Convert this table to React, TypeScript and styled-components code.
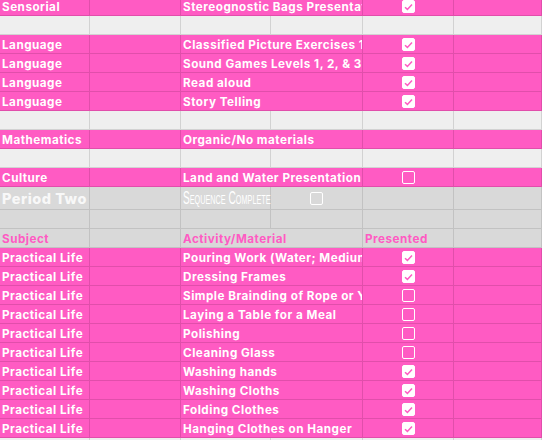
import * as React from "react";
import styled, { createGlobalStyle, css } from "styled-components";

const PINK = "#ff5bc3";

const GlobalStyle = createGlobalStyle`
  html, body {
    margin: 0;
    padding: 0;
    background: #efefef;
    overflow: hidden;
  }
`;

type Tone = "pink" | "light" | "gray" | "header";

const tones = {
  pink: { bg: PINK, line: "#e14eab", color: "#ffffff" },
  light: { bg: "#efefef", line: "#d2d2d2", color: "#ffffff" },
  gray: { bg: "#d9d9d9", line: "#c2c2c2", color: "#ffffff" },
  header: { bg: "#d9d9d9", line: "#c2c2c2", color: PINK }
};

const Sheet = styled.div`
  width: 542px;
  height: 440px;
  overflow: hidden;
  font-family: Inter, "Open Sans", sans-serif;
`;

const Grid = styled.div`
  margin-top: -3px;
  display: flex;
  flex-direction: column;
`;

const Row = styled.div<{ $tone: Tone; $tall?: boolean }>`
  display: grid;
  grid-template-columns: 90px 91px 90px 92px 91px 1fr;
  height: ${(p) => (p.$tall ? 23 : 19)}px;
  background: ${(p) => tones[p.$tone].bg};
  color: ${(p) => tones[p.$tone].color};
  border-bottom: 1px solid ${(p) => tones[p.$tone].line};
  box-sizing: border-box;
  --line: ${(p) => tones[p.$tone].line};
`;

const Cell = styled.div<{ $span?: number; $center?: boolean }>`
  grid-column: span ${(p) => p.$span ?? 1};
  border-right: 1px solid var(--line);
  display: flex;
  align-items: center;
  padding: 1px 2px 0;
  overflow: hidden;
  white-space: nowrap;
  font-size: 11.7px;
  font-weight: 700;
  letter-spacing: 0.5px;
  ${(p) =>
    p.$center &&
    css`
      justify-content: center;
    `}
`;

const PeriodTitle = styled(Cell)`
  font-size: 14.5px;
  font-weight: 800;
  letter-spacing: 0.5px;
  color: #f8f8f8;
`;

const SequenceCell = styled(Cell)`
  overflow: visible;
`;

const SequenceLabel = styled.span`
  display: inline-block;
  font-family: "Liberation Sans", sans-serif;
  font-variant: small-caps;
  font-weight: 400;
  font-size: 18px;
  letter-spacing: 0;
  color: #ffffff;
  transform: scaleX(0.56);
  transform-origin: left center;
`;

const Box = styled.span<{ $checked: boolean }>`
  width: 13px;
  height: 13px;
  box-sizing: border-box;
  border-radius: 2px;
  border: 1.5px solid #ffffff;
  background: ${(p) => (p.$checked ? "#ffffff" : "transparent")};
  display: flex;
  align-items: center;
  justify-content: center;
`;

const Check = ({ checked }: { checked: boolean }) => (
  <Box $checked={checked}>
    {checked && (
      <svg width="9" height="8" viewBox="0 0 9 8">
        <path d="M1 4.2 L3.4 6.4 L8 1.4" fill="none" stroke={PINK} strokeWidth="1.5" />
      </svg>
    )}
  </Box>
);

type Entry =
  | { kind: "item"; subject: string; activity: string; done?: boolean }
  | { kind: "empty" }
  | { kind: "period" }
  | { kind: "blankGray" }
  | { kind: "header" };

const rows: Entry[] = [
  { kind: "item", subject: "Sensorial", activity: "Stereognostic Bags Presentation", done: true },
  { kind: "empty" },
  { kind: "item", subject: "Language", activity: "Classified Picture Exercises 1", done: true },
  { kind: "item", subject: "Language", activity: "Sound Games Levels 1, 2, & 3", done: true },
  { kind: "item", subject: "Language", activity: "Read aloud", done: true },
  { kind: "item", subject: "Language", activity: "Story Telling", done: true },
  { kind: "empty" },
  { kind: "item", subject: "Mathematics", activity: "Organic/No materials" },
  { kind: "empty" },
  { kind: "item", subject: "Culture", activity: "Land and Water Presentation", done: false },
  { kind: "period" },
  { kind: "blankGray" },
  { kind: "header" },
  { kind: "item", subject: "Practical Life", activity: "Pouring Work (Water; Medium)", done: true },
  { kind: "item", subject: "Practical Life", activity: "Dressing Frames", done: true },
  { kind: "item", subject: "Practical Life", activity: "Simple Brainding of Rope or Yarn", done: false },
  { kind: "item", subject: "Practical Life", activity: "Laying a Table for a Meal", done: false },
  { kind: "item", subject: "Practical Life", activity: "Polishing", done: false },
  { kind: "item", subject: "Practical Life", activity: "Cleaning Glass", done: false },
  { kind: "item", subject: "Practical Life", activity: "Washing hands", done: true },
  { kind: "item", subject: "Practical Life", activity: "Washing Cloths", done: true },
  { kind: "item", subject: "Practical Life", activity: "Folding Clothes", done: true },
  { kind: "item", subject: "Practical Life", activity: "Hanging Clothes on Hanger", done: true },
  { kind: "empty" }
];

const blanks = (n: number) => Array.from({ length: n }, (_, k) => <Cell key={k} />);

const renderRow = (r: Entry, i: number) => {
  switch (r.kind) {
    case "item":
      return (
        <Row key={i} $tone="pink">
          <Cell>{r.subject}</Cell>
          <Cell />
          <Cell $span={2}>{r.activity}</Cell>
          <Cell $center>{r.done !== undefined && <Check checked={r.done} />}</Cell>
          <Cell />
        </Row>
      );
    case "empty":
      return (
        <Row key={i} $tone="light">
          {blanks(6)}
        </Row>
      );
    case "period":
      return (
        <Row key={i} $tone="gray" $tall>
          <PeriodTitle>Period Two</PeriodTitle>
          <Cell />
          <SequenceCell>
            <SequenceLabel>Sequence Complete</SequenceLabel>
          </SequenceCell>
          <Cell $center>
            <Check checked={false} />
          </Cell>
          <Cell />
          <Cell />
        </Row>
      );
    case "blankGray":
      return (
        <Row key={i} $tone="gray">
          {blanks(6)}
        </Row>
      );
    case "header":
      return (
        <Row key={i} $tone="header">
          <Cell>Subject</Cell>
          <Cell />
          <Cell $span={2}>Activity/Material</Cell>
          <Cell>Presented</Cell>
          <Cell />
        </Row>
      );
  }
};

export default function App() {
  return (
    <>
      <GlobalStyle />
      <Sheet>
        <Grid>{rows.map(renderRow)}</Grid>
      </Sheet>
    </>
  );
}
